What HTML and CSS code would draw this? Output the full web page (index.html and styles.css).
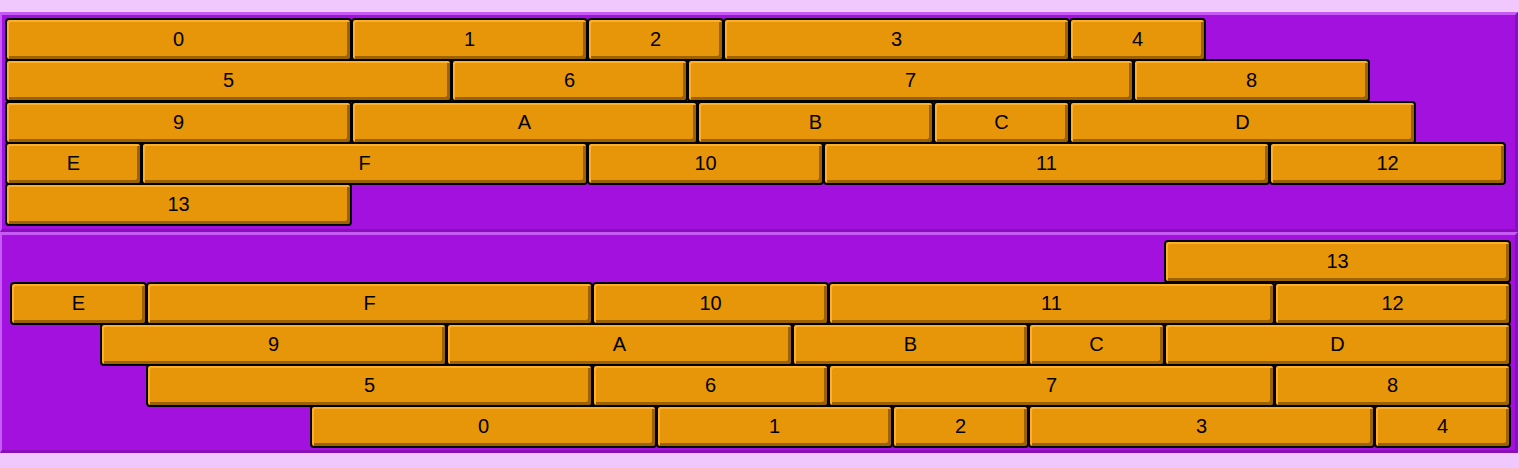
FILE: index.html
```html
<!DOCTYPE html>
<html lang="en">
<head>
    <meta charset="UTF-8">
    <title>Bricks</title>
    <link rel="stylesheet" href="styles.css">
</head>
<body>

<div class="wall">
    <div class="brick w3">0</div>
    <div class="brick w2">1</div>
    <div class="brick w1">2</div>
    <div class="brick w3">3</div>
    <div class="brick w1">4</div>
    <div class="brick w4">5</div>
    <div class="brick w2">6</div>
    <div class="brick w4">7</div>
    <div class="brick w2">8</div>
    <div class="brick w3">9</div>
    <div class="brick w3">A</div>
    <div class="brick w2">B</div>
    <div class="brick w1">C</div>
    <div class="brick w3">D</div>
    <div class="brick w1">E</div>
    <div class="brick w4">F</div>
    <div class="brick w2">10</div>
    <div class="brick w4">11</div>
    <div class="brick w2">12</div>
    <div class="brick w3">13</div>
</div>

<div class="wall wall-rev">
    <div class="brick w3">0</div>
    <div class="brick w2">1</div>
    <div class="brick w1">2</div>
    <div class="brick w3">3</div>
    <div class="brick w1">4</div>
    <div class="brick w4">5</div>
    <div class="brick w2">6</div>
    <div class="brick w4">7</div>
    <div class="brick w2">8</div>
    <div class="brick w3">9</div>
    <div class="brick w3">A</div>
    <div class="brick w2">B</div>
    <div class="brick w1">C</div>
    <div class="brick w3">D</div>
    <div class="brick w1">E</div>
    <div class="brick w4">F</div>
    <div class="brick w2">10</div>
    <div class="brick w4">11</div>
    <div class="brick w2">12</div>
    <div class="brick w3">13</div>
</div>

</body>
</html>
```

FILE: styles.css
```css
*{
    margin: 0;
    padding: 0;
    box-sizing: border-box;
}
body{
    background: #f0c8fd;
    padding-top: 12px;
    font-family: "Liberation Sans", Arial, sans-serif;
}
.wall{
    display: flex;
    flex-wrap: wrap;
    align-content: flex-start;
    margin-right: 1px;
    background: #a311df;
    border-style: solid;
    border-width: 3px 3px 3px 2px;
    border-color: #c65cf5 #8a0fb8 #8a0fb8 #c65cf5;
    padding: 3px 5px 5px 3px;
}
.wall-rev{
    flex-wrap: wrap-reverse;
    justify-content: flex-end;
    padding: 5px 5px 3px 3px;
}
.brick{
    height: 43px;
    margin: 0 -1px -1.75px 0;
    background: #e69608;
    border: 2px solid #000;
    border-radius: 4px;
    box-shadow: inset 2px 2px 0 #ffae2a, inset -3px -3px 0 #9c6200;
    color: #000;
    font-size: 20px;
    display: flex;
    align-items: center;
    justify-content: center;
}
.w1{ width: 137px; }
.w2{ width: 237px; }
.w3{ width: 347px; }
.w4{ width: 447px; }
```
